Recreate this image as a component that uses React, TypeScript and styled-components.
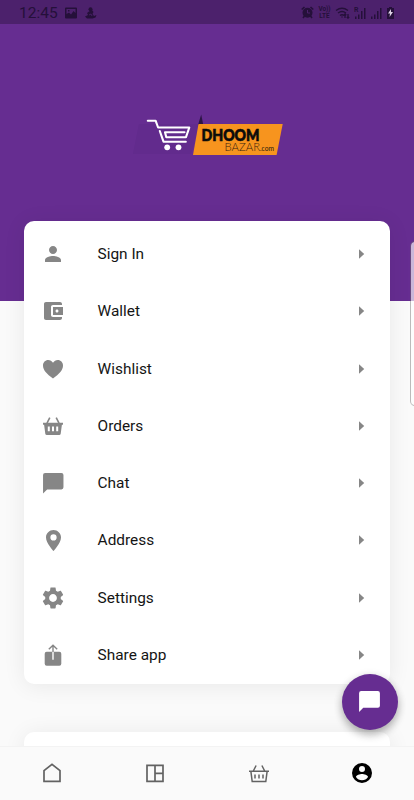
import React from 'react';
import styled, { createGlobalStyle } from 'styled-components';

const GlobalStyle = createGlobalStyle`
  * { box-sizing: border-box; }
  body { margin: 0; background: #fafafa; font-family: Roboto, sans-serif; }
`;

const Screen = styled.div`
  position: relative;
  width: 414px;
  height: 800px;
  display: flex;
  flex-direction: column;
  overflow: hidden;
  background: #fafafa;
`;

const StatusBar = styled.header`
  flex: none;
  height: 24px;
  display: flex;
  align-items: center;
  justify-content: space-between;
  padding: 1px 19px 0 19px;
  background: #4c216c;
  color: #25103a;
`;

const StatusGroup = styled.div<{ $gap: number }>`
  display: flex;
  align-items: center;
  gap: ${(p) => p.$gap}px;
  svg { display: block; }
`;

const Clock = styled.span`
  width: 38px;
  font-size: 15.5px;
  line-height: 22px;
  white-space: nowrap;
`;

const Lte = styled.span`
  display: flex;
  flex-direction: column;
  width: 13px;
  font-size: 6.4px;
  font-weight: 700;
  line-height: 7px;
  text-align: center;
`;

const Content = styled.main`
  flex: 1;
  min-height: 0;
  overflow: hidden;
`;

const Hero = styled.section`
  height: 277px;
  display: flex;
  justify-content: center;
  padding: 81px 0 0 11px;
  background: #662d91;
`;

const Card = styled.section`
  position: relative;
  margin: 0 24px;
  border-radius: 10px;
  background: #fff;
  box-shadow: 0 2px 22px rgba(0, 0, 0, 0.075);
`;

const MenuCard = styled(Card)`
  margin-top: -80px;
  padding: 4.3px 0 0.3px;
`;

const NextCard = styled(Card)`
  margin-top: 48px;
  height: 120px;
`;

const MenuRow = styled.div`
  height: 57.3px;
  display: grid;
  grid-template-columns: 58.6px 1fr 20px;
  align-items: center;
  padding: 0 19.5px 0 15px;
  color: #868686;
  svg { display: block; }
`;

const IconCell = styled.span`
  width: 28px;
  display: flex;
  justify-content: center;
`;

const Label = styled.span`
  color: #141414;
  font-size: 15.4px;
  line-height: 20px;
`;

const Fab = styled.button`
  position: absolute;
  left: 341.7px;
  top: 673.5px;
  width: 56px;
  height: 56px;
  border: 0;
  border-radius: 50%;
  display: flex;
  align-items: center;
  justify-content: center;
  padding: 0;
  background: #662d91;
  color: #fff;
  box-shadow: 0 5px 8px rgba(0, 0, 0, 0.24), 0 2px 10px rgba(0, 0, 0, 0.12);
`;

const EdgeHandle = styled.div`
  position: absolute;
  left: 410px;
  top: 241px;
  width: 12px;
  height: 165px;
  border: 1px solid rgba(110, 110, 110, 0.45);
  border-radius: 5px;
  background: rgba(255, 255, 255, 0.66);
  background-clip: padding-box;
`;

const BottomNav = styled.nav`
  position: relative;
  flex: none;
  height: 54.5px;
  display: grid;
  grid-template-columns: repeat(4, 1fr);
  align-items: center;
  justify-items: center;
  border-top: 1px solid #f3f3f3;
  background: #fafafa;
  color: #626262;
  svg { display: block; }
`;

const Glyph = ({ d, size = 24, color = 'currentColor' }: { d: string; size?: number; color?: string }) => (
  <svg width={size} height={size} viewBox="0 0 24 24" fill={color} fillRule="evenodd">
    <path d={d} />
  </svg>
);

const CHAT = 'M20 2H4a2 2 0 0 0-2 2v18l4-4h14a2 2 0 0 0 2-2V4a2 2 0 0 0-2-2z';

const BasketSolid = () => (
  <svg width="24" height="24" viewBox="0 0 24 24" fill="currentColor">
    <path d="M6 9.200 8.800 3.700M18 9.200 15.200 3.700" stroke="currentColor" strokeWidth="1.600" fill="none" />
    <path fillRule="evenodd" d="M2 8.700h20v2h-1.100l-1.200 9.100a1.500 1.500 0 0 1-1.500 1.200H5.800a1.500 1.500 0 0 1-1.500-1.200L3.100 10.700H2zM6.800 12.500v4.800h2v-4.800zm4.200 0v4.800h2v-4.800zm4.200 0v4.800h2v-4.800z" />
  </svg>
);

const ShareBox = () => (
  <svg width="24" height="24" viewBox="0 0 24 24" fill="currentColor">
    <path fillRule="evenodd" d="M5.700 8.800h5.600v8h1.400v-8h5.600a2 2 0 0 1 2 2v9.900a2 2 0 0 1-2 2H5.700a2 2 0 0 1-2-2v-9.900a2 2 0 0 1 2-2z" />
    <path d="M12 9V2.600M7.800 6.300 12 2.300l4.200 4" fill="none" stroke="currentColor" strokeWidth="1.400" />
  </svg>
);

const items: { label: string; icon: React.ReactNode }[] = [
  { label: 'Sign In', icon: <Glyph d="M12 12c2.210 0 4-1.790 4-4s-1.790-4-4-4-4 1.790-4 4 1.790 4 4 4zm0 2c-2.670 0-8 1.340-8 4v2h16v-2c0-2.660-5.330-4-8-4z" /> },
  { label: 'Wallet', icon: <Glyph d="M21 18v1c0 1.100-.9 2-2 2H5c-1.110 0-2-.9-2-2V5c0-1.100.890-2 2-2h14c1.100 0 2 .9 2 2v1h-9c-1.110 0-2 .9-2 2v8c0 1.100.890 2 2 2h9zm-9-2h10V8H12v8zm4-2.500c-.830 0-1.500-.670-1.500-1.500s.670-1.500 1.500-1.500 1.500.670 1.500 1.500-.670 1.500-1.500 1.500z" /> },
  { label: 'Wishlist', icon: <Glyph d="M16.800 3c-2 0-3.800 1.100-4.800 2.800C11 4.100 9.200 3 7.200 3 4.300 3 2 5.400 2 8.500c0 4.600 3.700 8.500 10 13 6.300-4.500 10-8.400 10-13C22 5.400 19.700 3 16.800 3z" /> },
  { label: 'Orders', icon: <BasketSolid /> },
  { label: 'Chat', icon: <Glyph size={24.5} d={CHAT} /> },
  { label: 'Address', icon: <Glyph size={25} d="M12 2C8.130 2 4.800 5.130 4.800 9c0 5.250 7.200 13 7.200 13s7.200-7.750 7.200-13c0-3.870-3.330-7-7.200-7zm0 10a3 3 0 1 1 0-6 3 3 0 0 1 0 6z" /> },
  { label: 'Settings', icon: <Glyph size={26} d="M19.140 12.940c.040-.3.060-.610.060-.940 0-.320-.020-.640-.070-.940l2.030-1.580c.180-.140.230-.410.120-.610l-1.920-3.320c-.120-.220-.370-.290-.590-.220l-2.390.960c-.5-.380-1.030-.7-1.620-.940l-.360-2.540c-.040-.240-.240-.410-.480-.410h-3.840c-.240 0-.430.170-.470.410l-.360 2.540c-.590.240-1.130.570-1.620.940l-2.390-.960c-.220-.080-.470 0-.590.220L2.740 8.870c-.120.210-.080.470.120.610l2.030 1.580c-.050.3-.090.630-.090.940s.020.640.070.940l-2.030 1.580c-.180.140-.230.410-.120.610l1.920 3.320c.120.220.370.290.590.220l2.390-.960c.5.380 1.030.7 1.620.940l.360 2.540c.050.240.240.410.480.410h3.840c.240 0 .440-.170.470-.410l.360-2.540c.590-.240 1.130-.560 1.620-.940l2.390.960c.220.080.470 0 .590-.220l1.920-3.320c.120-.220.070-.470-.120-.610l-2.010-1.580zM12 15.600c-1.980 0-3.600-1.620-3.600-3.600s1.620-3.600 3.600-3.600 3.600 1.620 3.600 3.600-1.620 3.600-3.600 3.600z" /> },
  { label: 'Share app', icon: <ShareBox /> },
];

const Logo = () => (
  <svg width="165" height="60" viewBox="0 0 165 60">
    <path d="M9 19H70L61 49H3z" fill="#5d2989" opacity=".5" />
    <path d="M71.200 9.500 73.300 20H68z" fill="#2c1545" />
    <path d="M68.500 19H152.700L146.600 50H63z" fill="#f7941e" />
    <g fill="none" stroke="#fff" strokeWidth="2.100" strokeLinecap="round" strokeLinejoin="round">
      <path d="M17.800 15.700H25.600L28.100 22.500H59.300L56 32.200H36.300L35 27.300H54.500" />
      <path d="M29.800 26 33.500 36.700H55.800" />
    </g>
    <circle cx="37.200" cy="42.300" r="2.900" fill="#fff" />
    <circle cx="48.500" cy="42.300" r="2.900" fill="#fff" />
    <text x="71.500" y="35.800" fontFamily="Lato, sans-serif" fontWeight="900" fontSize="17.200" textLength="58" lengthAdjust="spacingAndGlyphs" fill="#0b0b0b" stroke="#0b0b0b" strokeWidth=".7">DHOOM</text>
    <text x="94.500" y="46" fontFamily="Lato, sans-serif" fontWeight="300" fontSize="12" textLength="35.500" lengthAdjust="spacingAndGlyphs" fill="#3a2410">BAZAR</text>
    <text x="130" y="46" fontFamily="Lato, sans-serif" fontSize="7.500" textLength="14" lengthAdjust="spacingAndGlyphs" fill="#2a1a0c">.com</text>
  </svg>
);

const Signal = ({ roaming = false }: { roaming?: boolean }) => (
  <svg width="12" height="14" viewBox="0 0 12 14" fill="currentColor">
    <path d="M1 10.500h1.500v2.500H1zM4 8.500h1.500v4.500H4zM7 5h1.500v8H7zM10 2h1.500v11H10z" />
    {roaming && <text x="0" y="6" fontSize="7" fontWeight="700" fontFamily="Roboto, sans-serif">R</text>}
  </svg>
);

export default function App() {
  return (
    <>
      <GlobalStyle />
      <Screen>
        <StatusBar>
          <StatusGroup $gap={8}>
            <Clock>12:45</Clock>
            <svg width="12" height="12" viewBox="0 0 12 12">
              <path fill="currentColor" fillRule="evenodd" d="M1 .5h10a1 1 0 0 1 1 1v9a1 1 0 0 1-1 1H1a1 1 0 0 1-1-1v-9a1 1 0 0 1 1-1zm.5 1.500v5L4 5.500l2 2L8.500 4 10.500 6V2zM3 3h1.500v1.500H3z" />
            </svg>
            <svg width="12" height="12" viewBox="0 0 12 12" fill="currentColor">
              <circle cx="5.500" cy="2.200" r="2" />
              <path d="M4 4.500 7 3l1.500 2-1 2 1.500 2 2.500-1-1 2.500-3 1H2L0 9.500 3 8 2 6z" />
              <path d="m4 8 2-1 1 2" stroke="#4c216c" fill="none" strokeWidth=".8" />
            </svg>
          </StatusGroup>
          <StatusGroup $gap={4}>
            <svg width="13" height="13" viewBox="0 0 13 13">
              <circle cx="6.500" cy="6.700" r="5" fill="currentColor" />
              <path d="M.7 3.500 3.500 1M12.300 3.500 9.500 1M2 12l1.500-2M11 12l-1.500-2" stroke="currentColor" strokeWidth="1.600" />
              <path d="M6.500 4v3H9" fill="none" stroke="#4c216c" />
            </svg>
            <Lte><span>Vo))</span><span>LTE</span></Lte>
            <svg width="15" height="14" viewBox="0 0 15 14" fill="none" stroke="currentColor" strokeWidth="1.300">
              <path d="M1 4.500Q7 0 13 4.500M3 7Q7 4 11 7M5 9.500Q7 8 9 9.500M6.500 11h1M10 12V8M8.700 9.200 10 8l1.300 1.200M13 8v4M11.800 11l1.200 1.200 1.200-1.200" />
            </svg>
            <Signal roaming />
            <Signal />
            <svg width="9" height="14" viewBox="0 0 9 14">
              <path d="M3 1h3v1h2v11H1V2h2z" fill="currentColor" />
              <path d="M5 3 2 7.500h2L3.500 11 7 6H5z" fill="#ddd3e5" />
            </svg>
          </StatusGroup>
        </StatusBar>
        <Content>
          <Hero><Logo /></Hero>
          <MenuCard>
            {items.map(({ label, icon }) => (
              <MenuRow key={label}>
                <IconCell>{icon}</IconCell>
                <Label>{label}</Label>
                <svg width="20" height="20" viewBox="0 0 20 20" fill="currentColor"><path d="M8 5.200v9.600l5.200-4.800z" /></svg>
              </MenuRow>
            ))}
          </MenuCard>
          <NextCard />
        </Content>
        <BottomNav>
          <svg width="24" height="24" viewBox="0 0 24 24" fill="none" stroke="currentColor" strokeWidth="1.700"><path d="M4 20.300V9.700L12 3.400l8 6.300v10.600z" /></svg>
          <svg width="24" height="24" viewBox="0 0 24 24" fill="none" stroke="currentColor" strokeWidth="1.700"><path d="M4 4.300h16v16H4zM12 4.300v16M12 12.300h8" /></svg>
          <svg width="24" height="24" viewBox="0 0 24 24" fill="none" stroke="currentColor" strokeWidth="1.500"><path d="M2 10.300h20M6.300 10 9.100 4.500M17.700 10 14.900 4.500M3.900 10.500 5.200 20.500h13.600l1.300-10M8 13.500v4M12 13.500v4M16 13.500v4" /></svg>
          <Glyph color="#000" d="M12 2a10 10 0 1 0 0 20 10 10 0 0 0 0-20zm0 3a3 3 0 1 1 0 6 3 3 0 0 1 0-6zm0 14.200a7.200 7.200 0 0 1-6-3.220c.030-1.990 4-3.080 6-3.080s5.970 1.090 6 3.080a7.200 7.200 0 0 1-6 3.220z" />
        </BottomNav>
        <Fab aria-label="Open chat"><Glyph size={25} d={CHAT} /></Fab>
        <EdgeHandle />
      </Screen>
    </>
  );
}
